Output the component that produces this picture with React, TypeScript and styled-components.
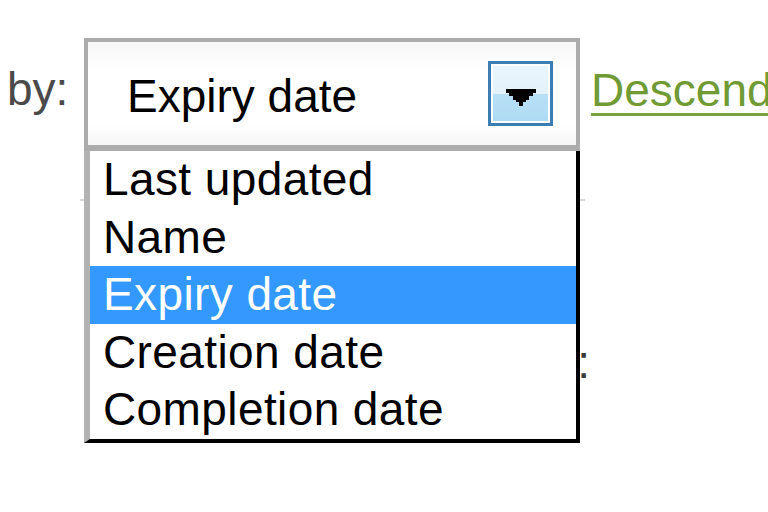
import React, { useState } from 'react'
import styled, { createGlobalStyle } from 'styled-components'

const GlobalStyle = createGlobalStyle`
  html, body {
    margin: 0;
    padding: 0;
    background: #ffffff;
  }
  body {
    font-family: 'Liberation Sans', Arial, sans-serif;
    width: 768px;
    height: 512px;
    overflow: hidden;
  }
`

const Page = styled.div`
  padding-top: 38px;
  width: 768px;
  height: 512px;
  box-sizing: border-box;
`

const Toolbar = styled.div`
  display: flex;
  align-items: flex-start;
  height: 113px;
`

const Label = styled.span`
  flex: 0 0 84px;
  box-sizing: border-box;
  padding: 28px 0 0 7px;
  font-size: 46px;
  line-height: 46px;
  color: #4a4a4a;
`

const SelectWrap = styled.div`
  position: relative;
  flex: 0 0 496px;
  height: 113px;
`

const SelectBox = styled.div`
  display: flex;
  align-items: center;
  justify-content: space-between;
  height: 100%;
  box-sizing: border-box;
  border: 4px solid #acacac;
  border-bottom-width: 6px;
  background: linear-gradient(#f7f7f7, #ffffff 30%, #ffffff 80%, #f6f6f6);
  padding: 0 23px 0 39px;
`

const SelectedText = styled.span`
  font-size: 46px;
  line-height: 46px;
  color: #000;
  padding-top: 4px;
`

const ArrowButton = styled.div`
  flex: 0 0 65px;
  height: 65px;
  box-sizing: border-box;
  border: 3px solid #3c7db3;
  padding: 2px;
  background: #ffffff;
  display: flex;
`

const ArrowFace = styled.div`
  flex: 1;
  display: flex;
  align-items: center;
  justify-content: center;
  padding-top: 9px;
  background: linear-gradient(#e8f5fd 0%, #e3f2fb 50%, #b8e0f6 50%, #aedbf4 100%);
`

const List = styled.ul`
  position: absolute;
  top: 113px;
  left: 0;
  width: 496px;
  margin: 0;
  padding: 0;
  list-style: none;
  box-sizing: border-box;
  background: #ffffff;
  border-left: 6px solid #b2b2b2;
  border-right: 4px solid #000000;
  border-bottom: 4px solid #000000;
  z-index: 2;
`

const Option = styled.li<{ $active?: boolean }>`
  height: 57.6px;
  line-height: 57.6px;
  padding-left: 13px;
  font-size: 46px;
  letter-spacing: 0.4px;
  white-space: nowrap;
  color: ${({ $active }) => ($active ? '#ffffff' : '#000000')};
  background: ${({ $active }) => ($active ? '#3399ff' : 'transparent')};
`

const LinkSlot = styled.div`
  flex: 1 1 auto;
  min-width: 0;
  overflow: hidden;
  padding: 29px 0 4px 11px;
`

const SortLink = styled.a`
  display: inline-block;
  font-size: 46px;
  line-height: 46px;
  color: #6f9a34;
  text-decoration: none;
  border-bottom: 3px solid #79a43d;
  white-space: nowrap;
`

const Divider = styled.div`
  margin: 48px 0 0 80px;
  width: 505px;
  height: 2px;
  background: #d6d6d6;
`

const HiddenRow = styled.div`
  display: flex;
  justify-content: flex-end;
  width: 590px;
  margin-top: 138px;
  font-size: 46px;
  line-height: 46px;
  color: #3a3a3a;
`

const options = ['Last updated', 'Name', 'Expiry date', 'Creation date', 'Completion date']

const DownArrow = () => (
  <svg width="30" height="18" viewBox="0 0 30 18">
    <path
      d="M0 0H30V4H27V7H23V11H20V13H17V17H13V13H10V11H7V7H3V4H0Z"
      fill="#000"
    />
  </svg>
)

const App = () => {
  const [selected] = useState('Expiry date')

  return (
    <Page>
      <GlobalStyle />
      <Toolbar>
        <Label>by:</Label>
        <SelectWrap>
          <SelectBox>
            <SelectedText>{selected}</SelectedText>
            <ArrowButton>
              <ArrowFace>
                <DownArrow />
              </ArrowFace>
            </ArrowButton>
          </SelectBox>
          <List>
            {options.map((o) => (
              <Option key={o} $active={o === selected}>
                {o}
              </Option>
            ))}
          </List>
        </SelectWrap>
        <LinkSlot>
          <SortLink href="#">Descending</SortLink>
        </LinkSlot>
      </Toolbar>
      <Divider />
      <HiddenRow>Status:</HiddenRow>
    </Page>
  )
}

export default App
